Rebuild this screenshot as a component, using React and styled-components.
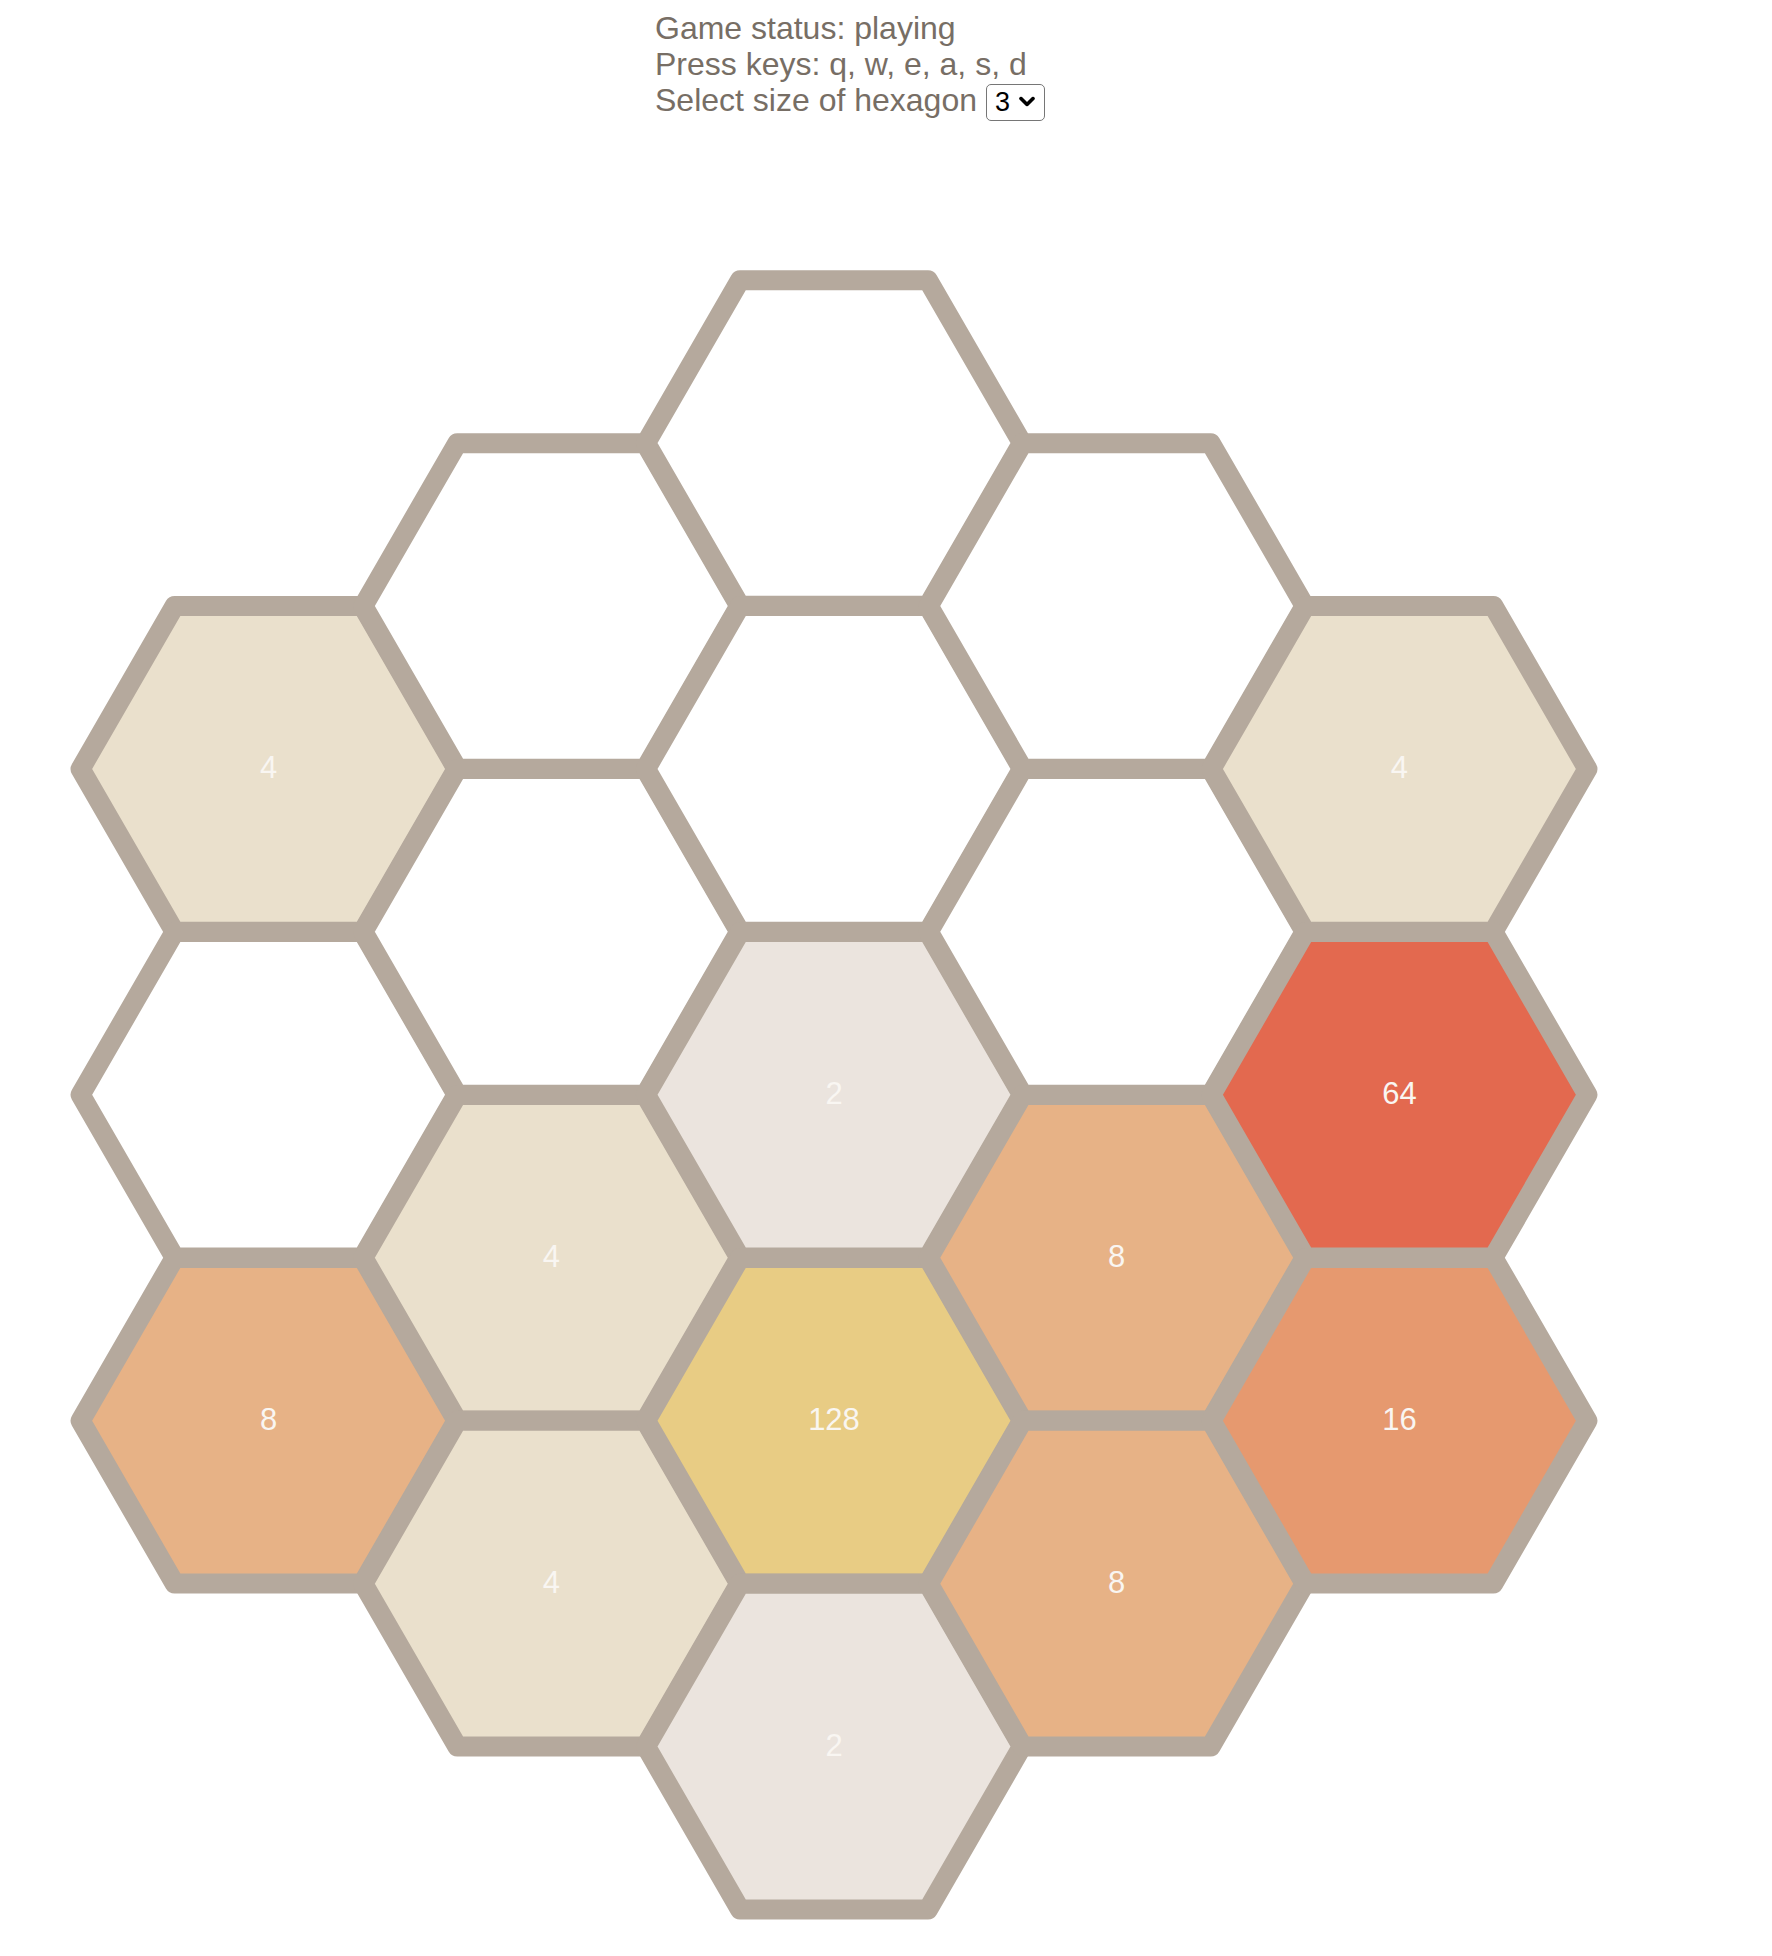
import React from "react";
import styled, { createGlobalStyle } from "styled-components";

const GlobalStyle = createGlobalStyle`
  html, body {
    margin: 0;
    padding: 0;
    background: #ffffff;
  }
  body {
    font-family: "Liberation Sans", Helvetica, Arial, sans-serif;
  }
`;

const Page = styled.main`
  display: flex;
  flex-direction: column;
  width: 1772px;
  min-height: 1956px;
  background: #ffffff;
`;

const Header = styled.header`
  box-sizing: border-box;
  height: 120px;
  padding: 10px 0 0 655px;
  font-size: 32px;
  line-height: 36px;
  color: #776e65;
`;

const Line = styled.div`
  white-space: nowrap;
`;

const SelectWrap = styled.span`
  position: relative;
  display: inline-block;
  vertical-align: baseline;
`;

const SizeSelect = styled.select`
  appearance: none;
  -webkit-appearance: none;
  box-sizing: border-box;
  width: 59px;
  height: 37px;
  padding: 0 0 0 8px;
  border: 1px solid #767676;
  border-radius: 5px;
  background: #ffffff;
  color: #000000;
  font-family: "Liberation Sans", Helvetica, Arial, sans-serif;
  font-size: 27px;
  outline: none;
`;

const Chevron = styled.svg`
  position: absolute;
  right: 10px;
  top: 50%;
  transform: translateY(-45%);
  pointer-events: none;
`;

const Board = styled.svg`
  display: block;
  width: 1772px;
  height: 1836px;
`;

const Cell = styled.polygon`
  fill: ${(p) => p.$fill};
  stroke: #b5a99d;
  stroke-width: 20;
  stroke-linejoin: round;
`;

const CellValue = styled.text`
  font-family: "Liberation Sans", Helvetica, Arial, sans-serif;
  font-size: 31px;
  fill: #f9f6f2;
  text-anchor: middle;
`;

const TILE_COLORS = {
  0: "#ffffff",
  2: "#ebe4de",
  4: "#eae0cc",
  8: "#e7b286",
  16: "#e6996f",
  64: "#e3694f",
  128: "#e8cc84",
};

const R = 188;
const COL_DX = 282.7;
const COL_X0 = 834 - 2 * COL_DX;
const ROW_DY = 325.9;
const TOP_Y = 443;

const columns = [
  [4, 0, 8],
  [0, 0, 4, 4],
  [0, 0, 2, 128, 2],
  [0, 0, 8, 8],
  [4, 64, 16],
];

function hexPoints(cx, cy) {
  const h = (R * Math.sqrt(3)) / 2;
  return [
    [cx - R, cy],
    [cx - R / 2, cy - h],
    [cx + R / 2, cy - h],
    [cx + R, cy],
    [cx + R / 2, cy + h],
    [cx - R / 2, cy + h],
  ]
    .map(([x, y]) => `${x.toFixed(2)},${y.toFixed(2)}`)
    .join(" ");
}

const cells = [];
columns.forEach((col, c) => {
  const offset = Math.abs(c - 2);
  const cx = COL_X0 + c * COL_DX;
  col.forEach((value, r) => {
    const cy = TOP_Y + (offset * ROW_DY) / 2 + r * ROW_DY;
    cells.push({ key: `${c}-${r}`, cx, cy, value });
  });
});

export default function App() {
  return (
    <>
      <GlobalStyle />
      <Page>
        <Header>
          <Line>Game status: playing</Line>
          <Line>Press keys: q, w, e, a, s, d</Line>
          <Line>
            Select size of hexagon{" "}
            <SelectWrap>
              <SizeSelect defaultValue="3">
                <option value="2">2</option>
                <option value="3">3</option>
                <option value="4">4</option>
              </SizeSelect>
              <Chevron width="16" height="10" viewBox="0 0 16 10">
                <polyline
                  points="2,2 8,8 14,2"
                  fill="none"
                  stroke="#000"
                  strokeWidth="3.6"
                  strokeLinecap="round"
                  strokeLinejoin="round"
                />
              </Chevron>
            </SelectWrap>
          </Line>
        </Header>
        <Board viewBox="0 120 1772 1836">
          {cells.map((cell) => (
            <g key={cell.key}>
              <Cell points={hexPoints(cell.cx, cell.cy)} $fill={TILE_COLORS[cell.value]} />
              {cell.value > 0 && (
                <CellValue x={cell.cx} y={cell.cy + 9}>
                  {cell.value}
                </CellValue>
              )}
            </g>
          ))}
        </Board>
      </Page>
    </>
  );
}
